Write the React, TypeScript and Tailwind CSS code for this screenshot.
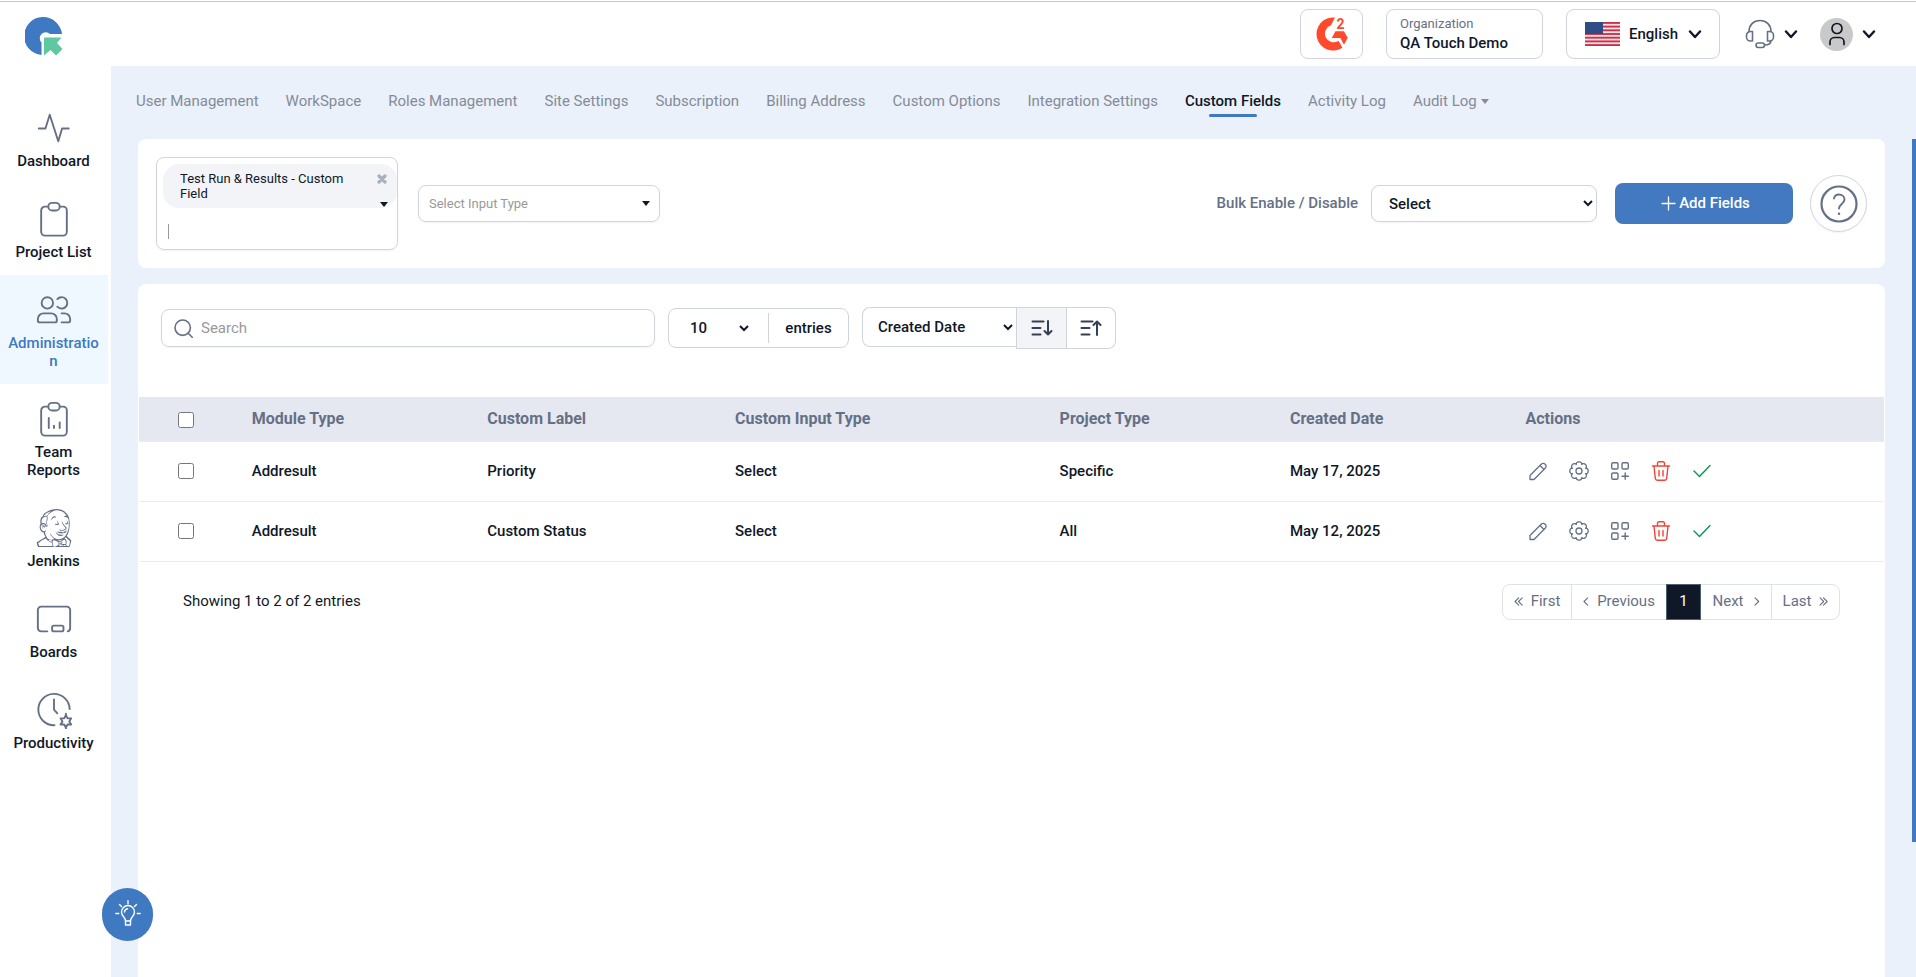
import type { ReactNode } from 'react';
import { SiJenkins } from 'react-icons/si';

type IconProps = { className?: string };

function Svg({ className, view = '0 0 40 40', width = 2, children }: { className?: string; view?: string; width?: number; children: ReactNode }) {
  return (
    <svg className={className} viewBox={view} fill="none" stroke="currentColor" strokeWidth={width} strokeLinecap="round" strokeLinejoin="round" aria-hidden="true">
      {children}
    </svg>
  );
}

const Logo = () => (
  <svg className="h-[39px] w-[38px]" viewBox="0 0 38 39" aria-hidden="true">
    <path d="M16.500 38A19 19 0 1 1 37 17L25 17A6 6 0 1 0 16.500 25.500Z" fill="#3e79c1" />
    <path d="M19 20.500H36.500L32 26L37.500 32L31 38.500L25.500 33L19 38.500Z" fill="#5fc8a0" />
  </svg>
);

const G2Logo = () => (
  <svg className="h-[34px] w-8" viewBox="0 0 32 34" fill="#ff492c" aria-hidden="true">
    <path d="M19 .5A16.600 16.600 0 1 0 26.500 30.700L22.500 23.800A8.700 8.700 0 1 1 15 8.300Z" />
    <path d="M19.500 14.300H28L31.700 20.800L28 27.800L24.300 21H15.700Z" />
    <text x="20.500" y="11.500" fontSize="14" fontWeight="700" fontFamily="Roboto, sans-serif">2</text>
  </svg>
);

const DashboardIcon = ({ className }: IconProps) => (
  <Svg className={className}><path d="M4 20.500h7L15.500 6l9 28 4-13.500h7" /></Svg>
);
const ClipboardIcon = ({ className }: IconProps) => (
  <Svg className={className}>
    <path d="M14 7h-3.500a4 4 0 0 0-4 4v22.500a4 4 0 0 0 4 4h19a4 4 0 0 0 4-4V11a4 4 0 0 0-4-4H26" />
    <rect x="14" y="3" width="12" height="8" rx="4" />
  </Svg>
);
const ReportIcon = ({ className }: IconProps) => (
  <Svg className={className}>
    <path d="M14 7h-3.500a4 4 0 0 0-4 4v22.500a4 4 0 0 0 4 4h19a4 4 0 0 0 4-4V11a4 4 0 0 0-4-4H26" />
    <rect x="14" y="3" width="12" height="8" rx="4" />
    <path d="M14.500 19v10.500M20 27v2.500M26 23.500v6" />
  </Svg>
);
const UsersIcon = ({ className }: IconProps) => (
  <Svg className={className}>
    <circle cx="13" cy="12.500" r="6" />
    <path d="M9 23.500h8a6 6 0 0 1 6 6V31a2 2 0 0 1-2 2H5a2 2 0 0 1-2-2v-1.500a6 6 0 0 1 6-6Z" />
    <path d="M23.500 8.500a6 6 0 1 1 0 8M28 23.500h3a6 6 0 0 1 6 6V31a2 2 0 0 1-2 2h-7" />
  </Svg>
);
const JenkinsIcon = ({ className }: IconProps) => <SiJenkins className={className} />;
const BoardIcon = ({ className }: IconProps) => (
  <Svg className={className}>
    <path d="M13 33H6.500A3.500 3.500 0 0 1 3 29.500v-19A3.500 3.500 0 0 1 6.500 7h27a3.500 3.500 0 0 1 3.500 3.500v19a3.500 3.500 0 0 1-2.500 3.500" />
    <rect x="18" y="27" width="12" height="6" rx="2" />
  </Svg>
);
const ProductivityIcon = ({ className }: IconProps) => (
  <Svg className={className}>
    <path d="M36.500 19a16.500 16.500 0 1 0-16 17" />
    <path d="M20 9v10.500l3.500 4" />
    <path d="m32.500 25.500 1.800 3.300 3.800 0-2 3.200 2 3.200-3.800 0-1.800 3.300-1.800-3.300-3.800 0 2-3.200-2-3.200 3.800 0Z" />
    <path d="M32.500 25.500v-1.500M32.500 38.500v1" />
  </Svg>
);

const sidebar: { label: string; Icon: (p: IconProps) => ReactNode; active?: boolean }[] = [
  { label: 'Dashboard', Icon: DashboardIcon },
  { label: 'Project List', Icon: ClipboardIcon },
  { label: 'Administration', Icon: UsersIcon, active: true },
  { label: 'Team Reports', Icon: ReportIcon },
  { label: 'Jenkins', Icon: JenkinsIcon },
  { label: 'Boards', Icon: BoardIcon },
  { label: 'Productivity', Icon: ProductivityIcon },
];

const tabs = [
  'User Management', 'WorkSpace', 'Roles Management', 'Site Settings', 'Subscription', 'Billing Address',
  'Custom Options', 'Integration Settings', 'Custom Fields', 'Activity Log', 'Audit Log',
];

const rows = [
  { module: 'Addresult', label: 'Priority', input: 'Select', project: 'Specific', date: 'May 17, 2025' },
  { module: 'Addresult', label: 'Custom Status', input: 'Select', project: 'All', date: 'May 12, 2025' },
];

const Chevron = () => (
  <Svg className="h-[9px] w-[14px]" view="0 0 14 9" width={2.400}><path d="m2 1.500 5 5.500 5-5.500" /></Svg>
);
const Caret = ({ className }: IconProps) => (
  <svg className={className} viewBox="0 0 8 5" fill="currentColor" aria-hidden="true"><path d="M0 0h8L4 5Z" /></svg>
);

const Flag = () => (
  <svg className="h-6 w-[35px]" viewBox="0 0 35 26" preserveAspectRatio="none" aria-hidden="true">
    <rect width="35" height="26" fill="#f7dfe3" />
    {[0, 4, 8, 12, 16, 20, 24].map((y) => <rect key={y} y={y} width="35" height="2" fill="#c8314b" />)}
    <rect width="18" height="13" fill="#2f4c86" />
  </svg>
);

const Headset = () => (
  <Svg className="h-[30px] w-[30px]" view="0 0 30 30" width={1.600}>
    <path d="M4 12.500C4 6 8.500 1.500 15 1.500S26 6 26 12.500" />
    <path d="M7.500 12.500v9.500H5.500A4 4 0 0 1 1.500 18v-1.500a4 4 0 0 1 4-4ZM22.500 12.500v9.500h2a4 4 0 0 0 4-4v-1.500a4 4 0 0 0-4-4Z" />
    <path d="M26 21.500c0 3-2 4.500-6.500 4.500" />
    <rect x="11" y="24" width="8.500" height="4.500" rx="2.200" />
  </Svg>
);

function Header() {
  return (
    <header className="mt-px flex h-[65px] items-center justify-between border-t border-[#c4c6c8] bg-white pr-10 pl-[25px]">
      <a href="#home" aria-label="QA Touch" className="pt-1"><Logo /></a>
      <div className="flex items-center">
        <a href="#g2" aria-label="G2" className="mr-[23px] flex h-[50px] w-[63px] items-center justify-center rounded-[8px] border border-[#d0d3e0]">
          <G2Logo />
        </a>
        <div className="mr-[23px] flex h-[50px] w-[157px] flex-col justify-center rounded-[8px] border border-[#d0d3e0] pl-[13px]">
          <span className="text-[13px] leading-[19px] text-[#667085]">Organization</span>
          <span className="text-[15px] leading-[21px] font-medium">QA Touch Demo</span>
        </div>
        <button type="button" className="mr-[25px] flex h-[50px] w-[154px] items-center rounded-[8px] border border-[#d0d3e0] pl-[18px]">
          <Flag />
          <span className="mr-[10px] ml-[9px] text-[15px] font-medium">English</span>
          <Chevron />
        </button>
        <button type="button" aria-label="Support" className="mr-[22px] flex items-center gap-[9px]">
          <span className="text-[#667085]"><Headset /></span>
          <Chevron />
        </button>
        <button type="button" aria-label="Account" className="flex items-center gap-[9px]">
          <span className="flex h-[33px] w-[33px] items-center justify-center rounded-full bg-[#c9c9c9]">
            <Svg className="h-6 w-5" view="0 0 20 24" width={1.700}>
              <circle cx="10" cy="6.500" r="5" />
              <path d="M3 22.500V20a4.500 4.500 0 0 1 4.500-4.500h5A4.500 4.500 0 0 1 17 20v2.500" />
            </Svg>
          </span>
          <Chevron />
        </button>
      </div>
    </header>
  );
}

function Sidebar() {
  return (
    <aside className="w-[111px] shrink-0 bg-white pt-[27px]">
      <nav className="w-[108px]" aria-label="Main">
        {sidebar.map(({ label, Icon, active }) => (
          <a
            key={label}
            href={'#' + label}
            className={
              'flex flex-col items-center pt-4 pr-2 pb-[14px] pl-[7px] text-center text-[15px] leading-[18px] font-medium ' +
              (active ? 'bg-[#f0f8ff] text-[#3e79c1]' : 'text-[#101828]')
            }
          >
            <Icon className="mb-[5px] h-[38px] w-[38px] text-[#667085]" />
            <span className={active ? 'w-full break-all' : 'w-full'}>{label}</span>
          </a>
        ))}
      </nav>
    </aside>
  );
}

function Tabs() {
  return (
    <nav aria-label="Settings" className="flex h-[73px] items-start gap-[27px] pt-[25px] pl-[25px] text-[15px] leading-5">
      {tabs.map((t) =>
        t === 'Custom Fields' ? (
          <a key={t} href="#fields" aria-current="page" className="flex flex-col items-center gap-[3px] font-medium text-[#101828]">
            {t}
            <span className="h-[3px] w-12 rounded-[2px] bg-[#3e79c1]" />
          </a>
        ) : (
          <a key={t} href={'#' + t} className="flex items-center gap-1 whitespace-nowrap text-[#858b98]">
            {t}
            {t === 'Audit Log' && <Caret className="h-[5px] w-2" />}
          </a>
        ),
      )}
    </nav>
  );
}

function Filters() {
  return (
    <section className="flex h-[129px] items-center rounded-[8px] bg-white pr-[18px] pl-[18px]">
      <div className="relative flex h-[93px] w-[242px] flex-col rounded-[8px] border border-[#d0d5dd] py-[6px] pl-[6px] shadow-xs">
        <div className="flex h-11 items-start justify-between rounded-[16px] bg-[#f2f4f7] py-[7px] pr-[10px] pl-[17px] text-[13px] leading-[15px]">
          <span className="w-[170px]">Test Run &amp; Results - Custom Field</span>
          <button type="button" aria-label="Remove" className="mt-[3px] text-[#a9b0bd]">
            <Svg className="h-[10px] w-[10px]" view="0 0 10 10" width={3.200}><path d="m2 2 6 6M8 2 2 8" /></Svg>
          </button>
        </div>
        <Caret className="absolute top-[44px] right-[9px] h-[5px] w-2 text-[#101828]" />
        <label className="mt-4 ml-[5px] flex h-[15px] border-l border-[#999]">
          <input aria-label="Module type" className="w-full bg-transparent text-[13px] outline-none" />
        </label>
      </div>
      <button type="button" className="ml-5 flex h-[37px] w-[242px] items-center justify-between rounded-[8px] border border-[#d0d5dd] pr-[9px] pl-[10px] text-[13px] text-[#999] shadow-xs">
        Select Input Type
        <Caret className="h-[5px] w-2 text-[#101828]" />
      </button>
      <label htmlFor="bulk" className="mr-[13px] ml-auto text-[15px] font-medium text-[#667085]">Bulk Enable / Disable</label>
      <select id="bulk" className="h-[37px] w-[226px] rounded-[8px] border border-[#d0d5dd] bg-white pl-[13px] text-[15px] font-medium shadow-xs">
        <option>Select</option>
      </select>
      <button type="button" className="ml-[18px] flex h-[41px] w-[178px] items-center justify-center gap-[3px] rounded-[8px] bg-[#4379c1] pl-[3px] text-[15px] font-medium text-white">
        <Svg className="h-[15px] w-[15px]" view="0 0 15 15" width={1.300}><path d="M7.500 1v13M1 7.500h13" /></Svg>
        Add Fields
      </button>
      <button type="button" aria-label="Help" className="ml-[17px] flex h-[57px] w-[57px] items-center justify-center rounded-full border border-[#d0d5dd] text-[#667085] shadow-xs">
        <Svg className="h-10 w-10" view="0 0 40 40" width={2.200}>
          <circle cx="20" cy="20" r="17.500" />
          <path strokeWidth="1.900" d="M15 14.500c.5-2.500 2.500-4 5-4 3 0 5.500 2 5.500 5 0 4.500-5.500 4.500-5.500 9" />
          <path strokeWidth="2.500" d="M20 29.700v.1" />
        </Svg>
      </button>
    </section>
  );
}

const SortIcon = ({ up }: { up?: boolean }) => (
  <Svg className="h-5 w-6 text-[#344054]" view="0 0 24 20" width={2}>
    <path d="M2.500 3.500h11M2.500 10h8M2.500 16.500h8" />
    {up ? <path d="M18 17V3.500M14.500 7 18 3.500 21.500 7" /> : <path d="M18 3v13.500M14.500 13l3.500 3.500 3.500-3.500" />}
  </Svg>
);

function Toolbar() {
  return (
    <div className="flex items-start pt-[23px] pl-[22px]">
      <label className="mt-[2px] flex h-[38px] w-[494px] items-center gap-2 rounded-[8px] border border-[#d0d5dd] pl-3 text-[#667085] shadow-xs">
        <Svg className="h-[19px] w-[19px] shrink-0" view="0 0 19 19" width={1.600}>
          <circle cx="8.700" cy="8.700" r="7.700" /><path d="m14.200 14.200 4 4" />
        </Svg>
        <input type="search" placeholder="Search" aria-label="Search" className="w-full bg-transparent text-[15px] outline-none placeholder:text-[#999]" />
      </label>
      <div className="mt-px ml-[13px] flex h-10 w-[181px] items-center rounded-[8px] border border-[#d0d5dd] text-[15px] font-medium">
        <select aria-label="Entries per page" className="ml-[13px] h-8 w-[70px] bg-white pl-1">
          <option>10</option>
        </select>
        <span className="ml-auto flex h-[30px] w-20 items-center justify-center border-l border-[#d0d5dd]">entries</span>
      </div>
      <div className="ml-[13px] flex items-start">
        <select aria-label="Sort by" className="h-10 w-[154px] rounded-l-[8px] border border-r-0 border-[#d0d5dd] bg-white pl-[11px] text-[15px] font-medium">
          <option>Created Date</option>
        </select>
        <button type="button" aria-label="Sort descending" className="flex h-[42px] w-[51px] items-center justify-center border border-[#d0d5dd] bg-[#f2f4f7]"><SortIcon /></button>
        <button type="button" aria-label="Sort ascending" className="flex h-[42px] w-[49px] items-center justify-center rounded-r-[8px] border border-l-0 border-[#d0d5dd]"><SortIcon up /></button>
      </div>
    </div>
  );
}

// Eight rounded lobes traced around a circle.
const gearOutline =
  'M' +
  Array.from({ length: 96 }, (_, i) => {
    const a = (i / 96) * Math.PI * 2;
    const r = 7.1 + 2.1 * Math.sqrt(Math.abs(Math.cos(4 * a)));
    return (10 + r * Math.cos(a)).toFixed(2) + ' ' + (10 + r * Math.sin(a)).toFixed(2);
  }).join('L') +
  'Z';

function Actions() {
  return (
    <div className="flex items-center gap-[21px] pl-[3px] text-[#667085]">
      <button type="button" aria-label="Edit">
        <Svg className="h-5 w-5" view="0 0 20 20" width={1.300}>
          <path d="M2 18.500v-4L13.200 3.300a2.700 2.700 0 0 1 4 0 2.700 2.700 0 0 1 0 4L6 18.500ZM12 4.500l4 4" />
        </Svg>
      </button>
      <button type="button" aria-label="Settings">
        <Svg className="h-5 w-5" view="0 0 20 20" width={1.300}>
          <circle cx="10" cy="10" r="3" />
          <path d={gearOutline} />
        </Svg>
      </button>
      <button type="button" aria-label="Add widget">
        <Svg className="h-5 w-5" view="0 0 20 20" width={1.400}>
          <rect x="1.700" y="1.700" width="6.300" height="6.300" rx="1.300" /><rect x="12" y="1.700" width="6.300" height="6.300" rx="1.300" />
          <rect x="1.700" y="12" width="6.300" height="6.300" rx="1.300" /><path d="M15.200 12v6.300M12 15.200h6.300" />
        </Svg>
      </button>
      <button type="button" aria-label="Delete" className="text-[#f04438]">
        <Svg className="h-5 w-5" view="0 0 20 20" width={1.400}>
          <path d="M1.500 5h17M3 5l1.300 12.500a2 2 0 0 0 2 1.700h7.400a2 2 0 0 0 2-1.700L17 5M6.500 4.500V2.300A1.500 1.500 0 0 1 8 .8h4a1.500 1.500 0 0 1 1.500 1.500v2.200M8 9.500v5.500M12 9.500v5.500" />
        </Svg>
      </button>
      <button type="button" aria-label="Enabled" className="text-[#079455]">
        <Svg className="h-5 w-5" view="0 0 20 20" width={1.400}><path d="m2 10 5.500 5.500L18 4.500" /></Svg>
      </button>
    </div>
  );
}

function FieldsTable() {
  return (
    <table className="mt-12 w-full table-fixed border-collapse text-left">
      <colgroup>
        <col className="w-[6%]" /><col className="w-[13.500%]" /><col className="w-[14.200%]" /><col className="w-[18.600%]" />
        <col className="w-[13.200%]" /><col className="w-[13.500%]" /><col />
      </colgroup>
      <thead>
        <tr className="h-11 border-b border-[#eaecf0] bg-[#e5e8f1] text-[16px] text-[#667085]">
          <th className="pl-[39px]"><input type="checkbox" aria-label="Select all" className="mt-[2px] block h-4 w-4" /></th>
          {['Module Type', 'Custom Label', 'Custom Input Type', 'Project Type', 'Created Date', 'Actions'].map((h) => (
            <th key={h} className="pl-2 font-bold">{h}</th>
          ))}
        </tr>
      </thead>
      <tbody className="text-[15px] font-medium">
        {rows.map((r) => (
          <tr key={r.date} className="h-[60px] border-b border-[#eaecf0]">
            <td className="pl-[39px]"><input type="checkbox" aria-label={'Select ' + r.label} className="block h-4 w-4" /></td>
            <td className="pl-2">{r.module}</td>
            <td className="pl-2">{r.label}</td>
            <td className="pl-2">{r.input}</td>
            <td className="pl-2">{r.project}</td>
            <td className="pl-2">{r.date}</td>
            <td className="pl-2"><Actions /></td>
          </tr>
        ))}
      </tbody>
    </table>
  );
}

const Angle = ({ double, right }: { double?: boolean; right?: boolean }) => (
  <Svg className={double ? 'h-[9px] w-[9px]' : 'h-[9px] w-[6px]'} view={double ? '0 0 9 9' : '0 0 6 9'} width={1.100}>
    {right ? <path d="m1 .8 3.700 3.700L1 8.200" /> : <path d="M4.700.8 1 4.500l3.700 3.700" />}
    {double && (right ? <path d="m4.500.8 3.700 3.700-3.700 3.700" /> : <path d="M8.200.8 4.500 4.500l3.700 3.700" />)}
  </Svg>
);

function Footer() {
  return (
    <div className="mt-[22px] flex items-center justify-between pr-11 pl-11 text-[15px]">
      <span>Showing 1 to 2 of 2 entries</span>
      <nav aria-label="Pagination" className="flex h-9 items-stretch rounded-[8px] border border-[#dfe3e8] text-[#667085]">
        <button type="button" className="flex w-[68px] items-center justify-center gap-2"><Angle double />First</button>
        <button type="button" className="flex w-[95px] items-center justify-center gap-2 border-l border-[#dfe3e8]"><Angle />Previous</button>
        <button type="button" aria-current="page" className="-my-px w-[35px] border border-[#4c6272] bg-[#101828] text-white">1</button>
        <button type="button" className="flex w-[70px] items-center justify-center gap-[10px]">Next<Angle right /></button>
        <button type="button" className="flex w-[68px] items-center justify-center gap-2 border-l border-[#dfe3e8]">Last<Angle double right /></button>
      </nav>
    </div>
  );
}

export default function App() {
  return (
    <div className="flex min-h-screen flex-col bg-white font-[Roboto,sans-serif] text-[#101828]">
      <Header />
      <div className="flex grow">
        <Sidebar />
        <div className="flex min-w-0 grow flex-col bg-[#eaf1fa]">
          <Tabs />
          <div className="flex grow">
            <main className="flex min-w-0 grow flex-col gap-4 pr-[27px] pl-[27px]">
              <Filters />
              <section className="grow rounded-t-[8px] bg-white px-px">
                <Toolbar />
                <FieldsTable />
                <Footer />
              </section>
            </main>
            <div className="h-[72vh] w-1 shrink-0 bg-[#3e79c1]" />
          </div>
        </div>
      </div>
      <button type="button" aria-label="Tips" className="fixed bottom-9 left-[102px] flex h-[53px] w-[51px] items-center justify-center rounded-full bg-[#3e79c1] pb-1 text-white">
        <Svg className="h-[26px] w-[26px]" view="0 0 26 26" width={1.400}>
          <path d="M10.500 21c0-4-4-4.500-4-9a6.500 6.500 0 0 1 13 0c0 4.500-4 5-4 9ZM10.500 21v4h5v-4M9.500 12a3.500 3.500 0 0 1 3-3.200M13 .8v3M4.500 4.500l2 2M21.500 4.500l-2 2M.8 13.500h3M22.200 13.500h3" />
        </Svg>
      </button>
    </div>
  );
}
